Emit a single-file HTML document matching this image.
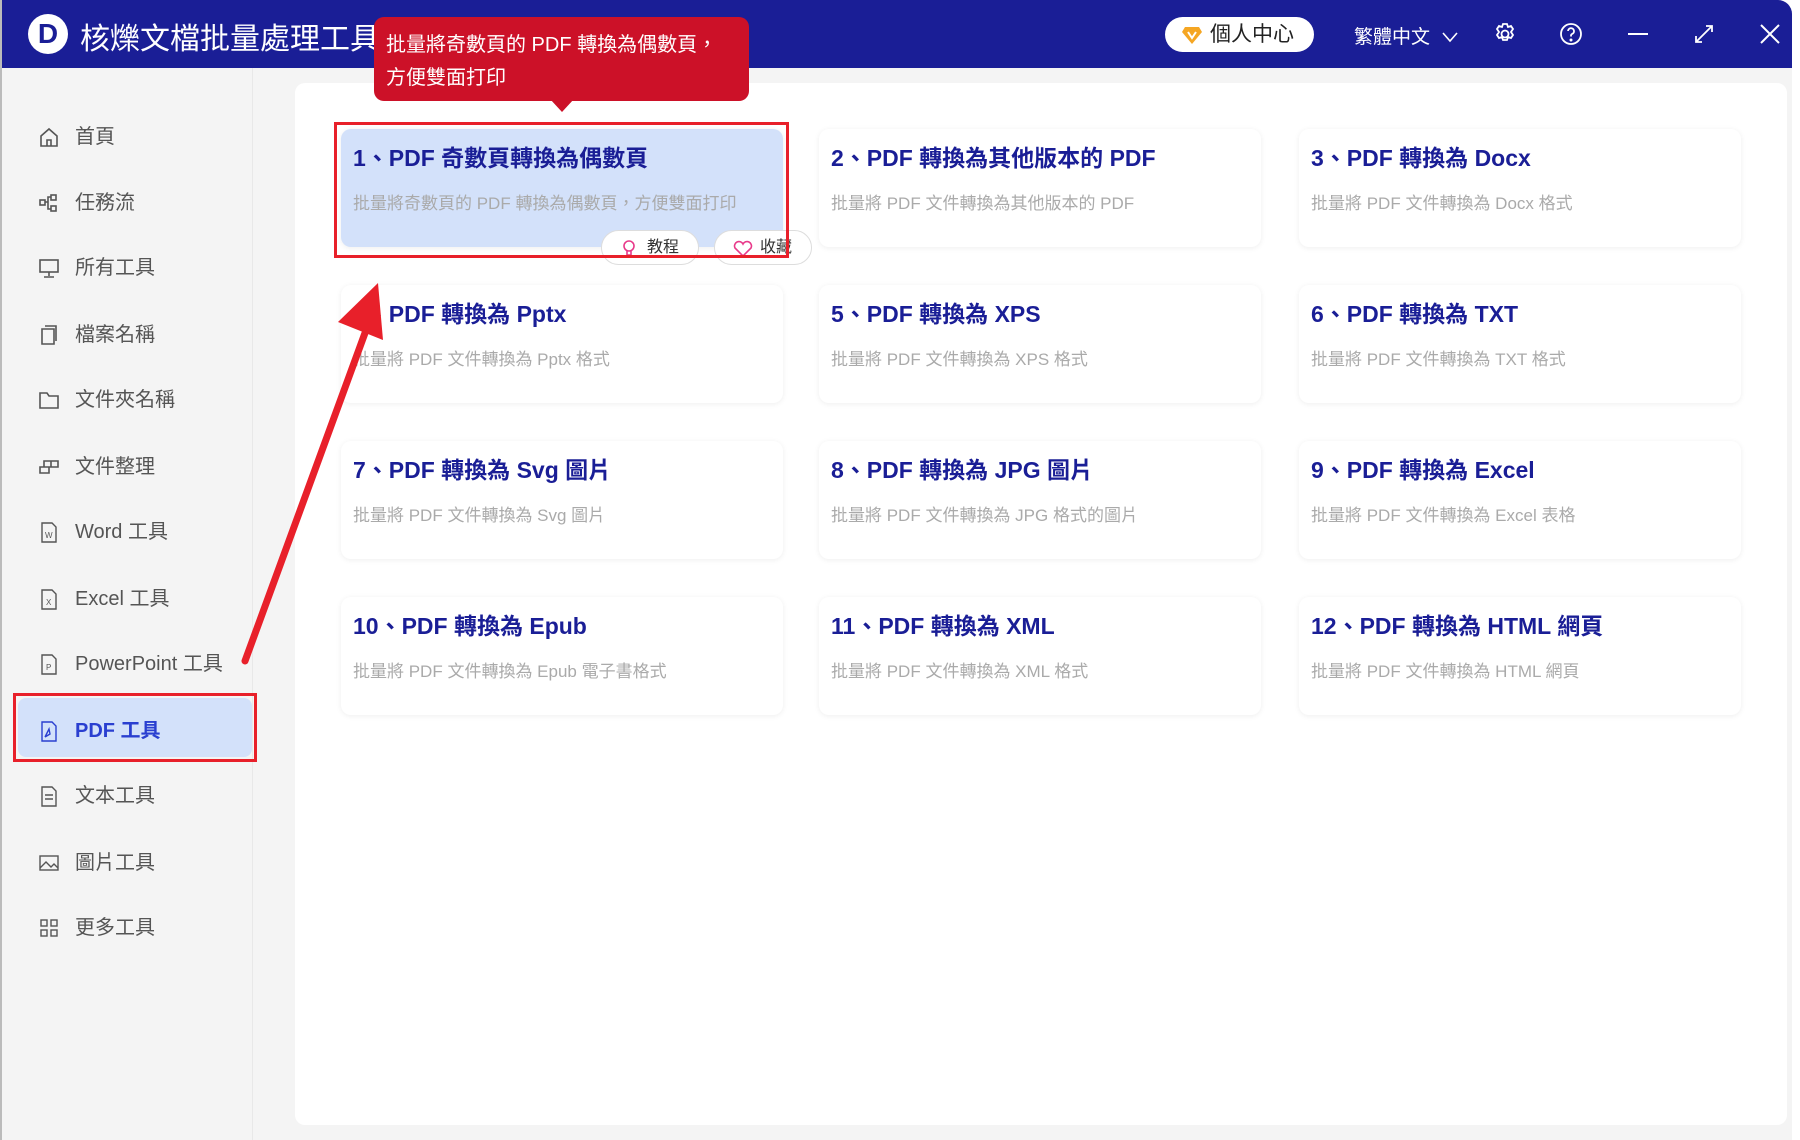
<!DOCTYPE html>
<html><head><meta charset="utf-8"><style>
*{margin:0;padding:0;box-sizing:border-box}
body{width:1800px;height:1140px;background:#fff;font-family:"Liberation Sans","Noto Sans CJK TC",sans-serif;position:relative;overflow:hidden}
.win{position:absolute;left:0;top:0;width:1792px;height:1140px;background:#f4f4f4;border-radius:0 14px 0 0;overflow:hidden;border-left:2px solid #bbb}
.hdr{position:absolute;left:0;top:0;width:100%;height:68px;background:#1a1e96}
.logo{position:absolute;left:26px;top:14px;width:40px;height:40px;border-radius:50%;background:#fff;color:#1a1e96;font:bold 28px "Liberation Sans";text-align:center;line-height:40px}
.title{position:absolute;left:78px;top:14px;color:#fff;font-size:30px;white-space:nowrap}
.pill{position:absolute;left:1163px;top:17px;width:149px;height:35px;border-radius:18px;background:#fff;font-size:21px;color:#222;line-height:35px;padding-left:45px}
.lang{position:absolute;left:1352px;top:22px;color:#fff;font-size:19px}
.side{position:absolute;left:0;top:68px;width:251px;height:1072px;border-right:1px solid #e8e8e8}
.it{position:absolute;left:36px;height:30px;font-size:20px;color:#555;line-height:30px;display:flex;align-items:center}
.it svg{margin-right:15px}
.main{position:absolute;left:293px;top:83px;width:1492px;height:1042px;background:#fff;border-radius:10px}
.card{position:absolute;width:442px;height:118px;background:#fff;border-radius:10px;box-shadow:0 1px 6px rgba(0,0,0,.07);padding:10px 12px}
.card h3{font-size:23px;color:#1a1e96;font-weight:bold;margin-top:0;white-space:nowrap}
.card p{font-size:17px;color:#aaa;margin-top:16px;white-space:nowrap}
.btn{position:absolute;top:230px;height:35px;width:98px;border-radius:18px;background:#fff;border:1px solid #ddd;font-size:16px;color:#333;line-height:33px;padding-left:45px}
</style></head><body>
<div class="win">
<div class="hdr">
<div class="logo">D</div>
<div class="title">核爍文檔批量處理工具</div>
<div class="pill"><svg style="position:absolute;left:17px;top:9px" width="20" height="18" viewBox="0 0 20 18"><path d="M3 1h14l3 5-10 12L0 6z" fill="#f5a623"/><path d="M6 6l4 6 4-6" stroke="#fff" stroke-width="2" fill="none"/></svg>個人中心</div>
<div class="lang">繁體中文 <svg width="18" height="12" viewBox="0 0 18 12" style="margin-left:6px"><path d="M2 2l7 8 7-8" stroke="#fff" stroke-width="1.6" fill="none"/></svg></div>
<svg style="position:absolute;left:1491px;top:22px" width="24" height="24" viewBox="0 0 24 24" fill="none" stroke="#fff" stroke-width="1.8"><circle cx="12" cy="12" r="3.5"/><path d="M10 2h4l1 3 3-1 2 3-2 3 2 3-2 3-3-1-1 3h-4l-1-3-3 1-2-3 2-3-2-3 2-3 3 1z"/></svg>
<svg style="position:absolute;left:1557px;top:22px" width="24" height="24" viewBox="0 0 24 24" fill="none" stroke="#fff" stroke-width="1.8"><circle cx="12" cy="12" r="10"/><path d="M9 9a3 3 0 1 1 4 3c-1 .5-1 1-1 2.5"/><circle cx="12" cy="18" r=".6" fill="#fff"/></svg>
<svg style="position:absolute;left:1624px;top:22px" width="24" height="24"><path d="M2 12h20" stroke="#fff" stroke-width="2"/></svg>
<svg style="position:absolute;left:1690px;top:22px" width="24" height="24" fill="none" stroke="#fff" stroke-width="1.8"><path d="M4 20L20 4M14 4h6v6M4 14v6h6"/></svg>
<svg style="position:absolute;left:1756px;top:22px" width="24" height="24" stroke="#fff" stroke-width="2"><path d="M3 3l18 18M21 3L3 21"/></svg>
</div>
<div class="side">
<div style="position:absolute;left:11px;top:625px;width:244px;height:69px;border:3px solid #e8202a"><div style="position:absolute;left:2px;top:2px;right:2px;bottom:2px;background:#d3e1fa;border-radius:8px"></div></div>
</div>
<div class="it" style="top:122px"><svg width="22" height="22" fill="none" stroke="#555" stroke-width="1.6"><path d="M3 10l8-7 8 7v10H3zM9 20v-6h4v6"/></svg>首頁</div>
<div class="it" style="top:188px"><svg width="22" height="22" fill="none" stroke="#555" stroke-width="1.6"><rect x="2" y="8" width="5" height="5"/><rect x="13" y="3" width="5" height="5"/><rect x="13" y="14" width="5" height="5"/><path d="M7 10h3V5h3M10 10v7h3"/></svg>任務流</div>
<div class="it" style="top:253px"><svg width="22" height="22" fill="none" stroke="#555" stroke-width="1.6"><rect x="2" y="3" width="18" height="12"/><path d="M11 15v4M6 20h10"/></svg>所有工具</div>
<div class="it" style="top:320px"><svg width="22" height="22" fill="none" stroke="#555" stroke-width="1.6"><path d="M4 5h12v15H4zM7 2h11v15"/></svg>檔案名稱</div>
<div class="it" style="top:385px"><svg width="22" height="22" fill="none" stroke="#555" stroke-width="1.6"><path d="M2 4h7l2 3h9v12H2z"/></svg>文件夾名稱</div>
<div class="it" style="top:452px"><svg width="22" height="22" fill="none" stroke="#555" stroke-width="1.6"><path d="M2 11h9v6H2zM6 11V5h7v6M13 5h7v6h-9"/></svg>文件整理</div>
<div class="it" style="top:517px"><svg width="22" height="22" fill="none" stroke="#555" stroke-width="1.4"><path d="M4 2h10l4 4v15H4z"/><text x="7" y="17" font-size="8" fill="#555" stroke="none">W</text></svg>Word 工具</div>
<div class="it" style="top:584px"><svg width="22" height="22" fill="none" stroke="#555" stroke-width="1.4"><path d="M4 2h10l4 4v15H4z"/><text x="8" y="17" font-size="8" fill="#555" stroke="none">X</text></svg>Excel 工具</div>
<div class="it" style="top:649px"><svg width="22" height="22" fill="none" stroke="#555" stroke-width="1.4"><path d="M4 2h10l4 4v15H4z"/><text x="8" y="17" font-size="8" fill="#555" stroke="none">P</text></svg>PowerPoint 工具</div>
<div class="it" style="top:716px;color:#2a3fd0;font-weight:bold"><svg width="22" height="22" fill="none" stroke="#2a3fd0" stroke-width="1.4"><path d="M4 2h10l4 4v15H4z"/><path d="M7 17l4-8 1 5-5 3"/></svg>PDF 工具</div>
<div class="it" style="top:781px"><svg width="22" height="22" fill="none" stroke="#555" stroke-width="1.4"><path d="M4 2h10l4 4v15H4zM7 10h8M7 14h8"/></svg>文本工具</div>
<div class="it" style="top:848px"><svg width="22" height="22" fill="none" stroke="#555" stroke-width="1.4"><rect x="2" y="4" width="18" height="14"/><path d="M2 16l6-6 5 5 3-3 4 4"/></svg>圖片工具</div>
<div class="it" style="top:913px"><svg width="22" height="22" fill="none" stroke="#555" stroke-width="1.4"><rect x="3" y="3" width="6" height="6"/><rect x="13" y="3" width="6" height="6"/><rect x="3" y="13" width="6" height="6"/><rect x="13" y="13" width="6" height="6"/></svg>更多工具</div>
<div class="main"></div>
<div class="card" style="left:339px;top:129px;background:#d3e1fa"><h3>1、PDF 奇數頁轉換為偶數頁</h3><p>批量將奇數頁的 PDF 轉換為偶數頁，方便雙面打印</p></div>
<div class="card" style="left:817px;top:129px"><h3>2、PDF 轉換為其他版本的 PDF</h3><p>批量將 PDF 文件轉換為其他版本的 PDF</p></div>
<div class="card" style="left:1297px;top:129px"><h3>3、PDF 轉換為 Docx</h3><p>批量將 PDF 文件轉換為 Docx 格式</p></div>
<div class="card" style="left:339px;top:285px"><h3>4、PDF 轉換為 Pptx</h3><p>批量將 PDF 文件轉換為 Pptx 格式</p></div>
<div class="card" style="left:817px;top:285px"><h3>5、PDF 轉換為 XPS</h3><p>批量將 PDF 文件轉換為 XPS 格式</p></div>
<div class="card" style="left:1297px;top:285px"><h3>6、PDF 轉換為 TXT</h3><p>批量將 PDF 文件轉換為 TXT 格式</p></div>
<div class="card" style="left:339px;top:441px"><h3>7、PDF 轉換為 Svg 圖片</h3><p>批量將 PDF 文件轉換為 Svg 圖片</p></div>
<div class="card" style="left:817px;top:441px"><h3>8、PDF 轉換為 JPG 圖片</h3><p>批量將 PDF 文件轉換為 JPG 格式的圖片</p></div>
<div class="card" style="left:1297px;top:441px"><h3>9、PDF 轉換為 Excel</h3><p>批量將 PDF 文件轉換為 Excel 表格</p></div>
<div class="card" style="left:339px;top:597px"><h3>10、PDF 轉換為 Epub</h3><p>批量將 PDF 文件轉換為 Epub 電子書格式</p></div>
<div class="card" style="left:817px;top:597px"><h3>11、PDF 轉換為 XML</h3><p>批量將 PDF 文件轉換為 XML 格式</p></div>
<div class="card" style="left:1297px;top:597px"><h3>12、PDF 轉換為 HTML 網頁</h3><p>批量將 PDF 文件轉換為 HTML 網頁</p></div>
<div class="btn" style="left:599px"><svg style="position:absolute;left:20px;top:8px" width="14" height="18" fill="none" stroke="#e83a8a" stroke-width="1.6"><circle cx="7" cy="7" r="5"/><path d="M5 12v4h4v-4"/></svg>教程</div>
<div class="btn" style="left:712px"><svg style="position:absolute;left:18px;top:9px" width="20" height="17" fill="none" stroke="#e83a8a" stroke-width="1.6"><path d="M10 16L2 8a4 4 0 0 1 8-4 4 4 0 0 1 8 4z"/></svg>收藏</div>
<div style="position:absolute;left:332px;top:122px;width:455px;height:136px;border:3px solid #e8202a"></div>
<div style="position:absolute;left:372px;top:17px;width:375px;height:84px;background:#cc1128;border-radius:10px;color:#fff;font-size:20px;line-height:33px;padding:12px 12px 0">批量將奇數頁的 PDF 轉換為偶數頁，<br>方便雙面打印</div>
<svg style="position:absolute;left:548px;top:99px" width="24" height="14"><path d="M0 0h24L12 13z" fill="#cc1128"/></svg>
<svg style="position:absolute;left:0;top:0" width="800" height="800"><path d="M243 661L363 333" stroke="#e8202a" stroke-width="7" stroke-linecap="round"/><path d="M376 283L336 322L381 340z" fill="#e8202a"/></svg>
</div>
</body></html>
